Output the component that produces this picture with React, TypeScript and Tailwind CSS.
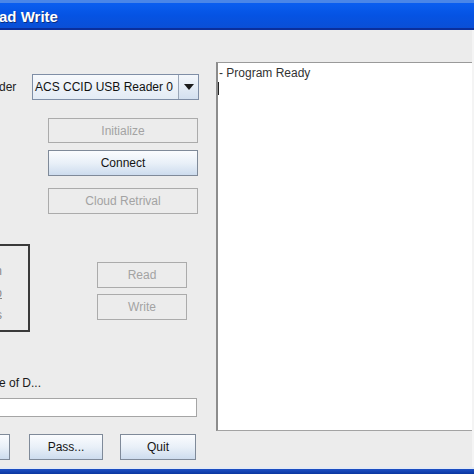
import React from "react";

const font = { fontFamily: '"Liberation Sans", Arial, sans-serif' };

function Btn({ label, enabled, className }: { label: string; enabled: boolean; className: string }) {
  return (
    <div
      className={
        "flex items-center justify-center text-[12px] leading-none " +
        (enabled
          ? "border border-[#7f8a99] bg-gradient-to-b from-[#fbfcfe] via-[#e9f0f8] to-[#cddcee] text-[#141414] "
          : "border border-[#ababab] bg-[#ececec] text-[#a3a3a3] ") +
        className
      }
    >
      {label}
    </div>
  );
}

export default function App() {
  return (
    <div className="w-[474px] h-[474px] overflow-hidden flex flex-col bg-[#ececec]" style={font}>
      {/* title bar */}
      <div className="h-[30px] flex flex-col shrink-0">
        <div className="h-[3px] bg-[#4a86e8]" />
        <div className="flex-1 bg-gradient-to-b from-[#0a5ef0] via-[#0553e3] to-[#0a4fd6] flex items-center">
          <span className="ml-[-1px] mt-[1px] text-white font-bold text-[15px] leading-none" style={{ textShadow: "1px 1px 0 #0a2f80" }}>
            ad Write
          </span>
        </div>
        <div className="h-[2px] bg-[#0a2f9c]" />
      </div>

      {/* content */}
      <div className="flex-1 flex flex-row border-r-2 border-[#f4f4f4]">
        {/* left panel */}
        <div className="w-[216px] shrink-0 flex flex-col">
          <div className="mt-[44px] h-[26px] flex items-center">
            <span className="w-[32px] text-[12px] text-[#222] ml-[-1px]">der</span>
            <div className="ml-[1px] w-[167px] h-[26px] border border-[#7f8ea6] flex bg-gradient-to-b from-[#f7f9fc] to-[#e3ebf5]">
              <div className="flex-1 flex items-center pl-[2px] text-[12px] text-[#111] whitespace-nowrap">ACS CCID USB Reader 0</div>
              <div className="w-[20px] border-l border-[#9aa6b8] flex items-center justify-center bg-gradient-to-b from-[#f4f7fb] to-[#d3e0f0]">
                <svg width="10" height="6" viewBox="0 0 10 6"><path d="M0 0 L10 0 L5 6 Z" fill="#1a1a1a" /></svg>
              </div>
            </div>
          </div>

          <div className="ml-[48px] mt-[18px] flex flex-col">
            <Btn label="Initialize" enabled={false} className="w-[150px] h-[25px]" />
            <Btn label="Connect" enabled={true} className="w-[150px] h-[26px] mt-[7px]" />
            <Btn label="Cloud Retrival" enabled={false} className="w-[150px] h-[26px] mt-[12px]" />
          </div>

          <div className="mt-[30px] flex flex-row">
            <div className="w-[30px] h-[88px] border-2 border-l-0 border-[#3a3a3a] overflow-hidden flex flex-col items-end pr-[26px] pt-[14px] text-[12px] text-[#8a8a8a] leading-[22px] whitespace-nowrap">
              <span>Version</span>
              <span className="underline">Info</span>
              <span>Status</span>
            </div>
            <div className="ml-[67px] mt-[18px] flex flex-col">
              <Btn label="Read" enabled={false} className="w-[90px] h-[26px]" />
              <Btn label="Write" enabled={false} className="w-[90px] h-[26px] mt-[6px]" />
            </div>
          </div>

          <div className="mt-[45px] text-[12px] text-[#1a1a1a] leading-none whitespace-nowrap ml-[-1px]">e of D...</div>
          <div className="mt-[9px] w-[198px] h-[19px] bg-white border border-[#a5a5a5] ml-[-1px]" />

          <div className="mt-[17px] flex flex-row">
            <Btn label="" enabled={true} className="w-[12px] h-[26px] ml-[-2px] border-l-0" />
            <Btn label="Pass..." enabled={true} className="w-[74px] h-[26px] ml-[19px]" />
            <Btn label="Quit" enabled={true} className="w-[76px] h-[26px] ml-[17px]" />
          </div>
        </div>

        {/* log panel */}
        <div className="flex-1 mt-[32px] mb-[36px] bg-white border-l-2 border-t border-b border-l-[#8c8c8c] border-t-[#9a9a9a] border-b-[#a3a3a3] flex flex-col">
          <div className="pl-[1px] pt-[3px] text-[12px] text-[#333] leading-[14px]">- Program Ready</div>
          <div className="mt-[2px] w-[1px] h-[13px] bg-[#222]" />
        </div>
      </div>

      {/* bottom frame */}
      <div className="h-[2px] bg-[#e4eaf4] shrink-0" />
      <div className="h-[5px] bg-gradient-to-b from-[#1d50c4] to-[#0b36a0] shrink-0" />
    </div>
  );
}
